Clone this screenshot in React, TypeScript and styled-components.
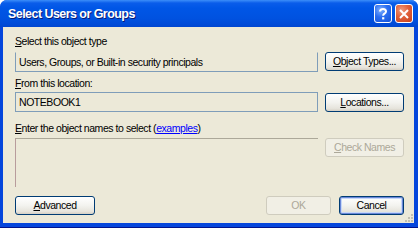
import { createGlobalStyle, styled } from 'styled-components';

const GlobalStyle = createGlobalStyle`
  html, body {
    margin: 0;
    padding: 0;
    background: #ffffff;
  }
  * {
    box-sizing: border-box;
  }
`;

export default function App() {
  return (
    <>
      <GlobalStyle />
      <Window>
        <TitleBar>
          <Title>Select Users or Groups</Title>
          <CaptionButtons>
            <CaptionBtn kind="help">
              <svg width="10" height="12" viewBox="0 0 10 12">
                <path
                  d="M2 3.6 C2 1.6 3.4 1 5 1 C6.8 1 8 2 8 3.5 C8 5 6.8 5.4 5.9 6.1 C5.3 6.6 5.2 7 5.2 7.8"
                  stroke="#fff"
                  strokeWidth="2"
                  fill="none"
                />
                <rect x="4.1" y="9.2" width="2.2" height="2.2" fill="#fff" />
              </svg>
            </CaptionBtn>
            <CaptionBtn kind="close">
              <svg width="10" height="10" viewBox="0 0 10 10">
                <path d="M1 1 L9 9 M9 1 L1 9" stroke="#fff" strokeWidth="2" />
              </svg>
            </CaptionBtn>
          </CaptionButtons>
        </TitleBar>
        <Body>
          <Label>
            <u>S</u>elect this object type
          </Label>
          <Row>
            <Field noTop>Users, Groups, or Built-in security principals</Field>
            <Button>
              <u>O</u>bject Types...
            </Button>
          </Row>
          <Label style={{ marginTop: 5 }}>
            <u>F</u>rom this location:
          </Label>
          <Row style={{ marginTop: 2 }}>
            <Field>NOTEBOOK1</Field>
            <Button offset={1}>
              <u>L</u>ocations...
            </Button>
          </Row>
          <Label style={{ marginTop: 10 }}>
            <u>E</u>nter the object names to select (<Link>examples</Link>)
          </Label>
          <Row style={{ marginTop: 3 }}>
            <NamesBox />
            <Button disabled>
              <u>C</u>heck Names
            </Button>
          </Row>
          <Footer>
            <Button wide>
              <u>A</u>dvanced
            </Button>
            <FooterRight>
              <Button disabled small>
                OK
              </Button>
              <Button small isDefault>
                Cancel
              </Button>
            </FooterRight>
          </Footer>
          <Grip>
            <svg width="10" height="10" viewBox="0 0 10 10">
              {[
                [7, 1],
                [4, 4],
                [7, 4],
                [1, 7],
                [4, 7],
                [7, 7],
              ].map(([x, y], i) => (
                <rect key={i} x={x} y={y} width="2" height="2" fill="#C2BFB1" />
              ))}
            </svg>
          </Grip>
        </Body>
      </Window>
    </>
  );
}

const Window = styled.div`
  width: 418px;
  height: 228px;
  display: flex;
  flex-direction: column;
  background: #0546DC;
  border-radius: 7px 7px 0 0;
  overflow: hidden;
  border-bottom: 1px solid #00138C;
`;

const TitleBar = styled.div`
  height: 27px;
  flex-shrink: 0;
  display: flex;
  align-items: flex-start;
  justify-content: space-between;
  padding: 0 5px 0 8px;
  background: linear-gradient(
    to bottom,
    #3C8EF9 0px,
    #0A5DEA 3px,
    #0056E6 8px,
    #0052E0 18px,
    #004BD8 24px,
    #0046D0 27px
  );
`;

const Title = styled.div`
  margin-top: 7px;
  font-family: 'Liberation Sans', Arial, sans-serif;
  font-size: 12.5px;
  font-weight: 700;
  letter-spacing: -0.55px;
  color: #ffffff;
  text-shadow: 1px 1px 0 #0A1C76;
  line-height: 14px;
`;

const CaptionButtons = styled.div`
  display: flex;
  gap: 3px;
  margin-top: 4px;
`;

const CaptionBtn = styled.div<{ kind: 'help' | 'close' }>`
  width: 18px;
  height: 19px;
  border: 1px solid #ffffff;
  border-radius: 3px;
  display: flex;
  align-items: center;
  justify-content: center;
  background: ${(p) =>
    p.kind === 'close'
      ? 'radial-gradient(circle at 35% 30%, #F09A7E 0%, #E0603A 45%, #C6401C 100%)'
      : 'radial-gradient(circle at 35% 30%, #7FB0FF 0%, #2A6DF0 45%, #1452D8 100%)'};
`;

const Body = styled.div`
  position: relative;
  flex: 1;
  margin: 0 4px 4px 3px;
  background: #ECE9D8;
  padding: 8px 10px 0 12px;
  display: flex;
  flex-direction: column;
  font-family: 'Liberation Sans', Arial, sans-serif;
  font-size: 10.5px;
  letter-spacing: -0.45px;
  color: #000000;
`;

const Label = styled.div`
  height: 13px;
  line-height: 13px;
  white-space: nowrap;
`;

const Link = styled.span`
  color: #0000FF;
  text-decoration: underline;
`;

const Row = styled.div`
  margin-top: 4px;
  display: grid;
  grid-template-columns: 303px 79px;
  column-gap: 7px;
  align-items: start;
`;

const Field = styled.div<{ noTop?: boolean }>`
  height: 20px;
  border: 1px solid #7F9DB9;
  border-top-color: ${(p) => (p.noTop ? '#ECE9D8' : '#7F9DB9')};
  padding: 0 3px;
  line-height: 18px;
  white-space: nowrap;
  background: #ECE9D8;
`;

const NamesBox = styled.div`
  height: 49px;
  border-top: 1px solid #ACA899;
  border-left: 1px solid #B89C9C;
  background: #ECE9D8;
`;

const Button = styled.button<{
  wide?: boolean;
  small?: boolean;
  isDefault?: boolean;
  offset?: number;
}>`
  width: ${(p) => (p.wide ? '80px' : p.small ? '65px' : '79px')};
  height: 19px;
  margin-top: ${(p) => p.offset || 0}px;
  padding: 0;
  border: 1px solid #003C74;
  border-radius: 3px;
  background: linear-gradient(to bottom, #FFFFFF 0%, #F3F3EF 50%, #E6E4DC 85%, #D6D0C5 100%);
  box-shadow: ${(p) => (p.isDefault ? 'inset 0 0 0 1px #6A87D8, inset 0 0 0 2px #C6D8F8' : 'none')};
  font-family: 'Liberation Sans', Arial, sans-serif;
  font-size: 10.5px;
  letter-spacing: -0.45px;
  color: #000000;
  line-height: 17px;
  white-space: nowrap;

  &:disabled {
    border-color: #CFCCBE;
    background: #F1EFE5;
    color: #ACA899;
  }
`;

const Footer = styled.div`
  margin-top: 9px;
  display: flex;
  justify-content: space-between;
`;

const FooterRight = styled.div`
  display: flex;
  gap: 8px;
`;

const Grip = styled.div`
  position: absolute;
  right: 0;
  bottom: 0;
  width: 10px;
  height: 10px;
  display: flex;
`;
